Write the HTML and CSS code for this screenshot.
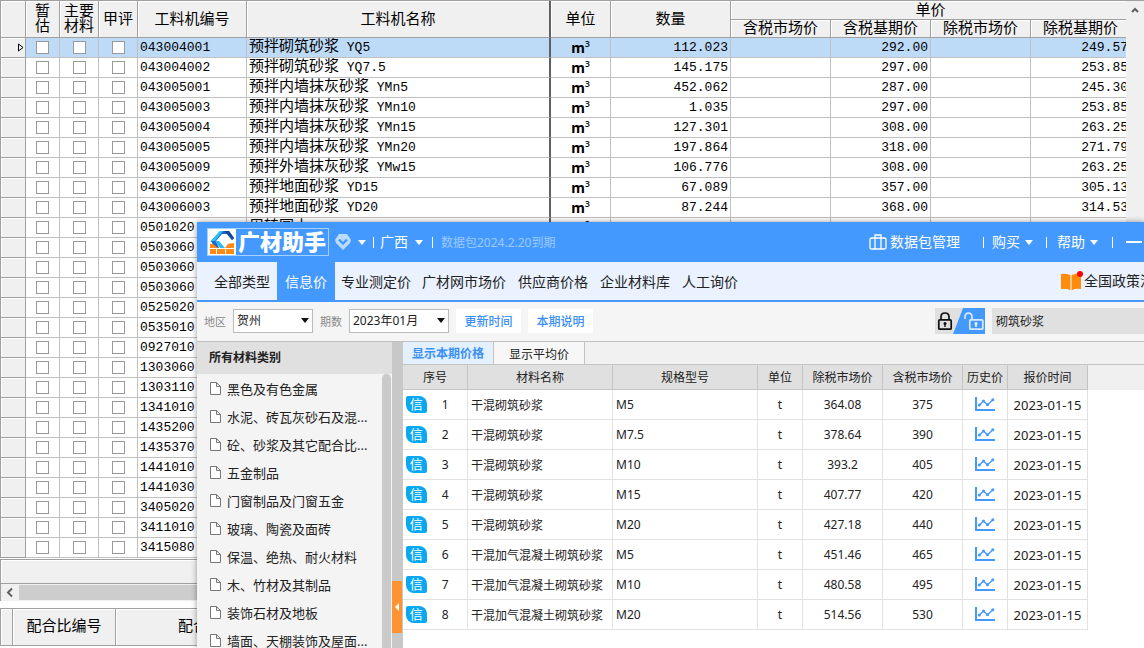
FILE: index.html
```html
<!DOCTYPE html>
<html lang="zh-CN">
<head>
<meta charset="utf-8">
<title>广材助手</title>
<link rel="stylesheet" href="styles.css">
</head>
<body>
<svg class="defs" aria-hidden="true">
  <symbol id="i-doc" viewBox="0 0 11 13"><path d="M.5.5h6l4 4v8H.5zM6.500.5v4h4" fill="#fff" stroke="#777"/></symbol>
  <symbol id="i-chart" viewBox="0 0 20 15"><path d="M1 0v13H20" fill="none" stroke="#49f" stroke-width="2"/><path d="M4 8.500 8.500 4l4 4L18 2.500" fill="none" stroke="#49f" stroke-width="1.300"/><g fill="#49f"><circle cx="4.300" cy="8" r="1.500"/><circle cx="8.500" cy="4" r="1.500"/><circle cx="12.500" cy="7.800" r="1.500"/><circle cx="17.800" cy="2.700" r="1.500"/></g></symbol>
</svg>

<main class="sheet">
  <div class="grid-area">
    <div class="grid-clip">
      <table class="grid">
        <colgroup>
          <col class="g-gutter"><col class="g-est"><col class="g-flag"><col class="g-flag"><col class="g-code"><col class="g-name"><col class="g-unit"><col class="g-qty"><col class="g-price"><col class="g-price"><col class="g-price"><col class="g-price">
        </colgroup>
        <thead>
          <tr>
            <th rowspan="2"></th><th rowspan="2">暂<br>估</th><th rowspan="2">主要<br>材料</th><th rowspan="2">甲评</th><th rowspan="2">工料机编号</th><th rowspan="2" class="split">工料机名称</th><th rowspan="2">单位</th><th rowspan="2">数量</th><th colspan="4" class="group">单价</th>
          </tr>
          <tr><th>含税市场价</th><th>含税基期价</th><th>除税市场价</th><th>除税基期价</th></tr>
        </thead>
        <tbody id="grid-rows"></tbody>
      </table>
    </div>
    <div class="vscroll"><svg width="8" height="6" viewBox="0 0 8 6"><path d="M1 5l3-3 3 3" fill="none" stroke="#606060" stroke-width="2"/></svg></div>
  </div>
  <div class="grid-foot"></div>
  <div class="hscroll"><svg width="18" height="17" viewBox="0 0 18 17"><path d="M11 4.500l-4 4 4 4" fill="none" stroke="#606060" stroke-width="2"/></svg><div class="hthumb"></div></div>
  <table class="mix">
    <colgroup><col class="m-gutter"><col class="m-code"><col></colgroup>
    <thead><tr><th></th><th>配合比编号</th><th class="mix-name">配合比名称</th></tr></thead>
  </table>
</main>

<section class="helper">
  <header class="titlebar">
    <div class="brand">
      <svg class="brand-mark" viewBox="0 0 28 27">
        <rect width="28" height="27" fill="#fff"/>
        <path d="M3 12 12 2h9l5 7-2 2-5-6h-5L8 12l3 7H7z" fill="#1d66d2"/>
        <path d="M3 12 12 2h3L7 12z" fill="#25c3fa"/>
        <path d="M16 2h5l5 7-2 2-5-6z" fill="#15479c"/>
        <path d="M7 12h4l6 7h-5z" fill="#27b9f5"/>
        <path d="M2 15h3l5 4H2zM17 19l3-4h-2l8-1v5zM2 20h6v5H2zM9 20h8v5H9zM18 20h8v5h-8z" fill="#ff8a14"/>
      </svg>
      <span class="brand-name">广材助手</span>
    </div>
    <svg class="badge-v" viewBox="0 0 16 16"><path d="M4 0h8l4 6-1 3-7 7-7-7-1-3z" fill="#bcdcff"/><path d="M4 5.500 8 9.500 12 5.500" fill="none" stroke="#49f" stroke-width="2.400"/></svg>
    <i class="tri"></i>
    <i class="bar"></i>
    <button class="tb-btn">广西<i class="tri"></i></button>
    <i class="bar"></i>
    <span class="expiry">数据包2024.2.20到期</span>
    <div class="tb-right">
      <button class="tb-btn pack"><svg width="18" height="16" viewBox="0 0 18 16"><g fill="none" stroke="#fff" stroke-width="1.300"><rect x="1" y="4" width="16" height="11" rx="1.500"/><path d="M6 15V1h6v14"/></g></svg>数据包管理</button>
      <i class="bar"></i>
      <button class="tb-btn buy">购买<i class="tri"></i></button>
      <i class="bar"></i>
      <button class="tb-btn help">帮助<i class="tri"></i></button>
      <i class="bar"></i>
      <button class="min" aria-label="最小化"></button>
    </div>
  </header>

  <nav class="tabs">
    <a href="#" class="tab">全部类型</a><a href="#" class="tab active">信息价</a><a href="#" class="tab">专业测定价</a><a href="#" class="tab">广材网市场价</a><a href="#" class="tab">供应商价格</a><a href="#" class="tab">企业材料库</a><a href="#" class="tab">人工询价</a>
    <a href="#" class="policy"><svg width="24" height="22" viewBox="0 0 24 22"><path d="M1 4q5-1 9 1v15q-4-2-9-1zM12 5q4-2 9-1v15q-5-1-9 1z" fill="#ff8a0c"/><path d="M10 5h2v15h-2z" fill="#ffc58a"/><circle cx="20" cy="4" r="3" fill="#f00"/></svg>全国政策法规</a>
  </nav>

  <div class="toolbar">
    <label for="area">地区</label>
    <span class="pick area"><select id="area"><option>贺州</option></select></span>
    <label for="period">期数</label>
    <span class="pick period"><select id="period"><option>2023年01月</option></select></span>
    <button class="link-btn">更新时间</button>
    <button class="link-btn">本期说明</button>
    <button class="lock" aria-label="锁定"><svg viewBox="0 0 50 26">
      <path d="M0 0h28L18 26H0z" fill="#e0e0e0"/><path d="M28 0h22v26H18z" fill="#49f"/>
      <g fill="none" stroke="#111" stroke-width="1.700"><rect x="3.800" y="11.800" width="12.400" height="9.400" rx="1"/><path d="M6 11.500V9q0-4 4-4t4 4v2.500"/></g>
      <circle cx="10" cy="15.500" r="1.500" fill="#111"/><path d="M9.300 15.500h1.400V19H9.300z" fill="#111"/>
      <g fill="none" stroke="#d8eaff" stroke-width="1.700"><rect x="34.800" y="11.800" width="13" height="9.400" rx="1"/><path d="M30 11V9q0-3.800 3.500-3.800T37 9v3"/></g>
      <circle cx="41" cy="15.500" r="1.500" fill="#fff"/><path d="M40.300 15.500h1.400V19h-1.400z" fill="#fff"/>
    </svg></button>
    <input class="search" type="text" value="砌筑砂浆" aria-label="搜索材料">
  </div>

  <div class="body">
    <aside class="side">
      <h2>所有材料类别</h2>
      <div class="side-scroll">
        <ul id="cats"></ul>
        <div class="side-thumb"></div>
      </div>
    </aside>
    <div class="splitter"><button class="handle" aria-label="收起"><i></i></button></div>
    <div class="prices">
      <div class="subtabs"><button class="active">显示本期价格</button><button>显示平均价</button></div>
      <div class="price-wrap">
        <table class="price-table">
          <colgroup><col class="p-no"><col class="p-name"><col class="p-name"><col class="p-unit"><col class="p-num"><col class="p-num"><col class="p-unit"><col class="p-num"></colgroup>
          <thead><tr><th>序号</th><th>材料名称</th><th>规格型号</th><th>单位</th><th>除税市场价</th><th>含税市场价</th><th>历史价</th><th>报价时间</th></tr></thead>
          <tbody id="price-rows"></tbody>
        </table>
      </div>
    </div>
  </div>
</section>
<script src="app.js"></script>
</body>
</html>
```
FILE: styles.css
```css
* { box-sizing: border-box; }
html, body { height: 100%; }
body {
  margin: 0;
  overflow: hidden;
  position: relative;
  background: #fff;
  color: #000;
  font-family: "Noto Sans", "Noto Sans CJK SC", sans-serif;
}
button { border: 0; padding: 0; margin: 0; background: none; font: inherit; color: inherit; }
a { color: inherit; text-decoration: none; }
table { border-collapse: separate; border-spacing: 0; table-layout: fixed; }
.defs { display: none; }

/* cost sheet */
.sheet { display: flex; flex-direction: column; font-family: "Liberation Mono", "Noto Sans CJK SC", monospace; }
.grid-area { display: flex; border-top: 1px solid #a0a0a0; border-left: 1px solid #a0a0a0; }
.grid-clip { flex: 1; min-width: 0; overflow: hidden; }
.grid { width: 1130px; min-width: 100%; }
.grid th, .grid td { padding: 0; overflow: hidden; white-space: nowrap; }
.g-gutter { width: 25px; }
.g-est { width: 34px; }
.g-flag { width: 39px; }
.g-code { width: 109px; }
.g-name { width: 304px; }
.g-unit { width: 60px; }
.g-qty { width: 120px; }
.g-price { width: 100px; }
.grid th, .mix th {
  font-weight: 400;
  font-size: 15px;
  line-height: 15px;
  background: #f0f0f0;
  border-right: 1px solid #a0a0a0;
  border-bottom: 1px solid #a0a0a0;
  box-shadow: inset 1px 1px #fff;
}
.grid th, .mix th { padding-top: 2px; }
.grid thead tr:first-child { height: 19px; }
.grid thead tr + tr { height: 18px; }
.grid tbody tr { height: 20px; }
.grid td {
  height: 20px;
  line-height: 18px;
  font-size: 13px;
  border-right: 1px solid #c0c0c0;
  border-bottom: 1px solid #c0c0c0;
}
.grid td:first-child { background: #f0f0f0; border-color: #a0a0a0; box-shadow: inset 1px 1px #fff; }
.grid td:first-child svg { display: block; margin: 0 1px 0 auto; }
.grid .split { border-right: 2px solid #606060; }
.grid .picked td { background: #bddaf7; }
.grid .picked td:first-child { background: #f0f0f0; }
.grid td.code { padding-left: 2px; }
.grid td.name { padding: 1px 0 0 2px; }
.grid td.name b { font-weight: 400; font-size: 15px; }
.grid td.unit { text-align: center; font: 14px/18px "Noto Sans", sans-serif; }
.grid td.num { text-align: right; padding-right: 2px; }
.grid input {
  appearance: none;
  display: block;
  width: 13px;
  height: 13px;
  margin: 0 auto;
  border: 1px solid #999;
  background: #fff;
}
.vscroll { width: 18px; background: #f0f0f0; padding: 6px 4px 0 5px; }
.vscroll svg { display: block; }
.grid-foot { height: 25px; margin-top: 1px; background: #f0f0f0; border: 1px solid #a0a0a0; border-right: 0; box-shadow: inset 1px 1px #fff; }
.hscroll { display: flex; height: 17px; padding: 1px 0; background: #f0f0f0; border-left: 1px solid #a0a0a0; }
.hscroll svg { flex: none; margin-top: -1px; }
.hthumb { flex: 1; background: #cdcdcd; }
.mix { width: 100%; margin-top: 7px; border-top: 1px solid #a0a0a0; border-left: 1px solid #a0a0a0; }
.mix th { height: 37px; }
.m-gutter { width: 12px; }
.m-code { width: 103px; }
.mix th.mix-name { text-align: left; padding-left: 62px; }

/* price helper window */
.helper {
  position: absolute;
  top: 222px;
  right: 0;
  bottom: 0;
  left: 197px;
  display: flex;
  flex-direction: column;
  background: #f5f5f5;
  box-shadow: 0 0 6px rgba(0, 0, 0, .4);
  overflow: hidden;
}
.tri { display: inline-block; border: 4px solid transparent; border-top: 5px solid #fff; border-bottom: 0; }
.bar { width: 1px; height: 11px; background: #fff; }
.titlebar {
  flex: none;
  display: flex;
  align-items: center;
  height: 40px;
  padding-left: 10px;
  background: #4499ff;
  color: #fff;
  font-size: 14px;
}
.titlebar > * { flex: none; }
.brand { display: flex; height: 28px; width: 122px; border: 1px solid #a5d0ff; margin-right: 6px; overflow: hidden; }
.brand-mark { width: 28px; height: 27px; flex: none; }
.brand-name { flex: none; margin-left: 2px; font-weight: 900; font-size: 22px; line-height: 25px; }
.badge-v { width: 16px; height: 16px; margin-right: 7px; }
.badge-v + .tri { margin-right: 7px; }
.tb-btn { display: flex; align-items: center; line-height: 20px; }
.tb-btn .tri { margin-left: 7px; }
.bar + .tb-btn { margin: 0 9px 0 6px; }
.expiry { margin-left: 8px; font-size: 12px; color: #9ccaff; }
.tb-right { display: flex; align-items: center; margin-left: auto; padding-right: 2px; }
.tb-right svg { margin-right: 3px; }
.tb-right .pack { margin-right: 23px; }
.tb-right .tri { margin-left: 5px; }
.tb-right .buy { margin: 0 13px 0 8px; }
.tb-right .help { margin: 0 14px 0 10px; }
.min { width: 16px; height: 2px; margin-left: 13px; background: #fff; }

.tabs {
  flex: none;
  display: flex;
  height: 40px;
  padding-left: 13px;
  background: #ebf2ff;
  border-bottom: 2px solid #4499ff;
  font-size: 14px;
  line-height: 40px;
  color: #222;
}
.tab { padding: 0 4px 0 8px; white-space: nowrap; }
.tab:first-child { padding: 0 7px 0 4px; }
.tab.active { padding: 0 8px; height: 38px; background: #4499ff; color: #fff; }
.tab.active + .tab { padding: 0 3px 0 6px; }
.policy { display: flex; align-items: center; width: 84px; margin-left: auto; overflow: hidden; white-space: nowrap; }
.policy svg { flex: none; }

.toolbar {
  flex: none;
  display: flex;
  align-items: center;
  height: 40px;
  padding: 0 0 1px 7px;
  border-bottom: 1px solid #bfbfbf;
  background: #f5f5f5;
  font-size: 12px;
}
.toolbar label { width: 29px; font-size: 11px; color: #888; }
.pick { position: relative; height: 24px; margin-right: 7px; }
.pick::after { content: ""; position: absolute; top: 9px; right: 4px; border: 4px solid transparent; border-top: 5px solid #111; border-bottom: 0; pointer-events: none; }
.pick select { appearance: none; width: 100%; height: 24px; padding: 0 4px 1px 3px; border: 1px solid #bbb; border-radius: 0; background: #fff; color: #222; font: inherit; }
.area { width: 80px; }
.period { width: 100px; }
.link-btn { width: 65px; height: 24px; margin-right: 7px; background: #fff; color: #3a90f5; font-weight: 500; }
.lock { width: 50px; height: 26px; margin-left: auto; }
.lock svg { display: block; width: 50px; height: 26px; }
.search { width: 152px; height: 26px; margin-left: 7px; padding: 0 4px; border: 0; background: #e0e0e0; color: #222; font: inherit; }

.body { flex: 1; display: flex; min-height: 0; }
.side { flex: none; width: 195px; display: flex; flex-direction: column; background: #f4f4f4; }
.side h2 { flex: none; margin: 0; padding-left: 12px; height: 32px; line-height: 32px; font-size: 12px; font-weight: 700; color: #222; background: #e0e0e0; }
.side-scroll { flex: 1; display: flex; min-height: 0; overflow: hidden; }
.side ul { flex: 1; margin: 0; padding: 0 0 0 13px; list-style: none; }
.side li { display: flex; align-items: center; gap: 6px; height: 28px; font-size: 13px; color: #222; white-space: nowrap; }
.side li svg { width: 11px; height: 13px; }
.side-thumb { width: 9px; margin-right: 1px; border-radius: 5px 5px 0 0; background: #cacaca; }
.splitter { flex: none; width: 11px; padding-top: 239px; background: #c8c8c8; }
.handle { display: flex; align-items: center; justify-content: center; width: 10px; height: 52px; background: #ff9333; }
.handle i { border: 4px solid transparent; border-right: 4px solid #fff; border-left: 0; }

.prices { flex: 1; min-width: 0; display: flex; flex-direction: column; background: #fff; font-size: 12px; color: #222; }
.subtabs { display: flex; height: 23px; background: #f1f1f1; border-bottom: 1px solid #c4c4c4; }
.subtabs button { width: 91px; padding-top: 2px; border-right: 1px solid #c4c4c4; background: #f7f7f7; }
.subtabs .active { padding-top: 0; background: #e3f0ff; color: #3a90f5; font-weight: 700; }
.price-wrap { background: linear-gradient(#f0f0f0 25px, #fff 25px); overflow: hidden; }
.price-table { width: 685px; }
.p-no { width: 65px; }
.p-name { width: 145px; }
.p-unit { width: 45px; }
.p-num { width: 80px; }
.price-table th { height: 25px; padding: 0; font-weight: 400; background: #e0e0e0; border-right: 1px solid #c4c4c4; border-bottom: 1px solid #c4c4c4; }
.price-table td { height: 30px; padding: 0 3px; text-align: center; white-space: nowrap; border-right: 1px solid #e2e2e2; border-bottom: 1px solid #e2e2e2; }
.price-table td.left { text-align: left; }
.price-table td.date { font-size: 13px; line-height: 16px; }
.price-table td svg { display: block; width: 20px; height: 15px; margin: 0 auto; }
.no { display: flex; align-items: center; padding-bottom: 1px; }
.no span { width: 22px; height: 17px; border-radius: 2px 8px 2px 8px; background: #09a8f0; color: #fff; font-size: 13px; line-height: 17px; }
.no em { width: 40px; font-style: normal; }
```
FILE: app.js
```javascript
const gridRows = [
  ["043004001", "预拌砌筑砂浆", "YQ5", "112.023", "292.00", "249.57"],
  ["043004002", "预拌砌筑砂浆", "YQ7.5", "145.175", "297.00", "253.85"],
  ["043005001", "预拌内墙抹灰砂浆", "YMn5", "452.062", "287.00", "245.30"],
  ["043005003", "预拌内墙抹灰砂浆", "YMn10", "1.035", "297.00", "253.85"],
  ["043005004", "预拌内墙抹灰砂浆", "YMn15", "127.301", "308.00", "263.25"],
  ["043005005", "预拌内墙抹灰砂浆", "YMn20", "197.864", "318.00", "271.79"],
  ["043005009", "预拌外墙抹灰砂浆", "YMw15", "106.776", "308.00", "263.25"],
  ["043006002", "预拌地面砂浆", "YD15", "67.089", "357.00", "305.13"],
  ["043006003", "预拌地面砂浆", "YD20", "87.244", "368.00", "314.53"],
  ["0501020", "周转圆木", "", "", "", ""],
  ...["0503060", "0503060", "0503060", "0525020", "0535010", "0927010", "1303060", "1303110",
    "1341010", "1435200", "1435370", "1441010", "1441030", "3405020", "3411010", "3415080"]
    .map(code => [code, "", "", "", "", ""])
];
const pointer = '<svg width="6" height="9" viewBox="0 0 6 9"><path d="M.5 1 5 4.500.5 8z" fill="none" stroke="#000"/></svg>';
const box = label => `<td><input type="checkbox" aria-label="${label}"></td>`;
document.getElementById("grid-rows").innerHTML = gridRows.map(([code, name, spec, qty, incl, excl], i) => `
  <tr${i === 0 ? ' class="picked"' : ""}>
    <td>${i === 0 ? pointer : ""}</td>${box("暂估")}${box("主要材料")}${box("甲评")}
    <td class="code">${code}</td><td class="name split"><b>${name}</b> ${spec}</td>
    <td class="unit">${name ? "<b>m</b>³" : ""}</td><td class="num">${qty}</td>
    <td></td><td class="num">${incl}</td><td></td><td class="num">${excl}</td>
  </tr>`).join("");

const cats = ["黑色及有色金属", "水泥、砖瓦灰砂石及混...", "砼、砂浆及其它配合比...", "五金制品", "门窗制品及门窗五金",
  "玻璃、陶瓷及面砖", "保温、绝热、耐火材料", "木、竹材及其制品", "装饰石材及地板", "墙面、天棚装饰及屋面..."];
document.getElementById("cats").innerHTML = cats
  .map(c => `<li><svg><use href="#i-doc"/></svg>${c}</li>`).join("");

const prices = [
  ["干混砌筑砂浆", "M5", "364.08", "375"],
  ["干混砌筑砂浆", "M7.5", "378.64", "390"],
  ["干混砌筑砂浆", "M10", "393.2", "405"],
  ["干混砌筑砂浆", "M15", "407.77", "420"],
  ["干混砌筑砂浆", "M20", "427.18", "440"],
  ["干混加气混凝土砌筑砂浆", "M5", "451.46", "465"],
  ["干混加气混凝土砌筑砂浆", "M10", "480.58", "495"],
  ["干混加气混凝土砌筑砂浆", "M20", "514.56", "530"]
];
document.getElementById("price-rows").innerHTML = prices.map(([name, spec, excl, incl], i) => `
  <tr><td><div class="no"><span>信</span><em>${i + 1}</em></div></td>
  <td class="left">${name}</td><td class="left">${spec}</td><td>t</td><td>${excl}</td><td>${incl}</td>
  <td><svg><use href="#i-chart"/></svg></td><td class="date">2023-01-15</td></tr>`).join("");
```
